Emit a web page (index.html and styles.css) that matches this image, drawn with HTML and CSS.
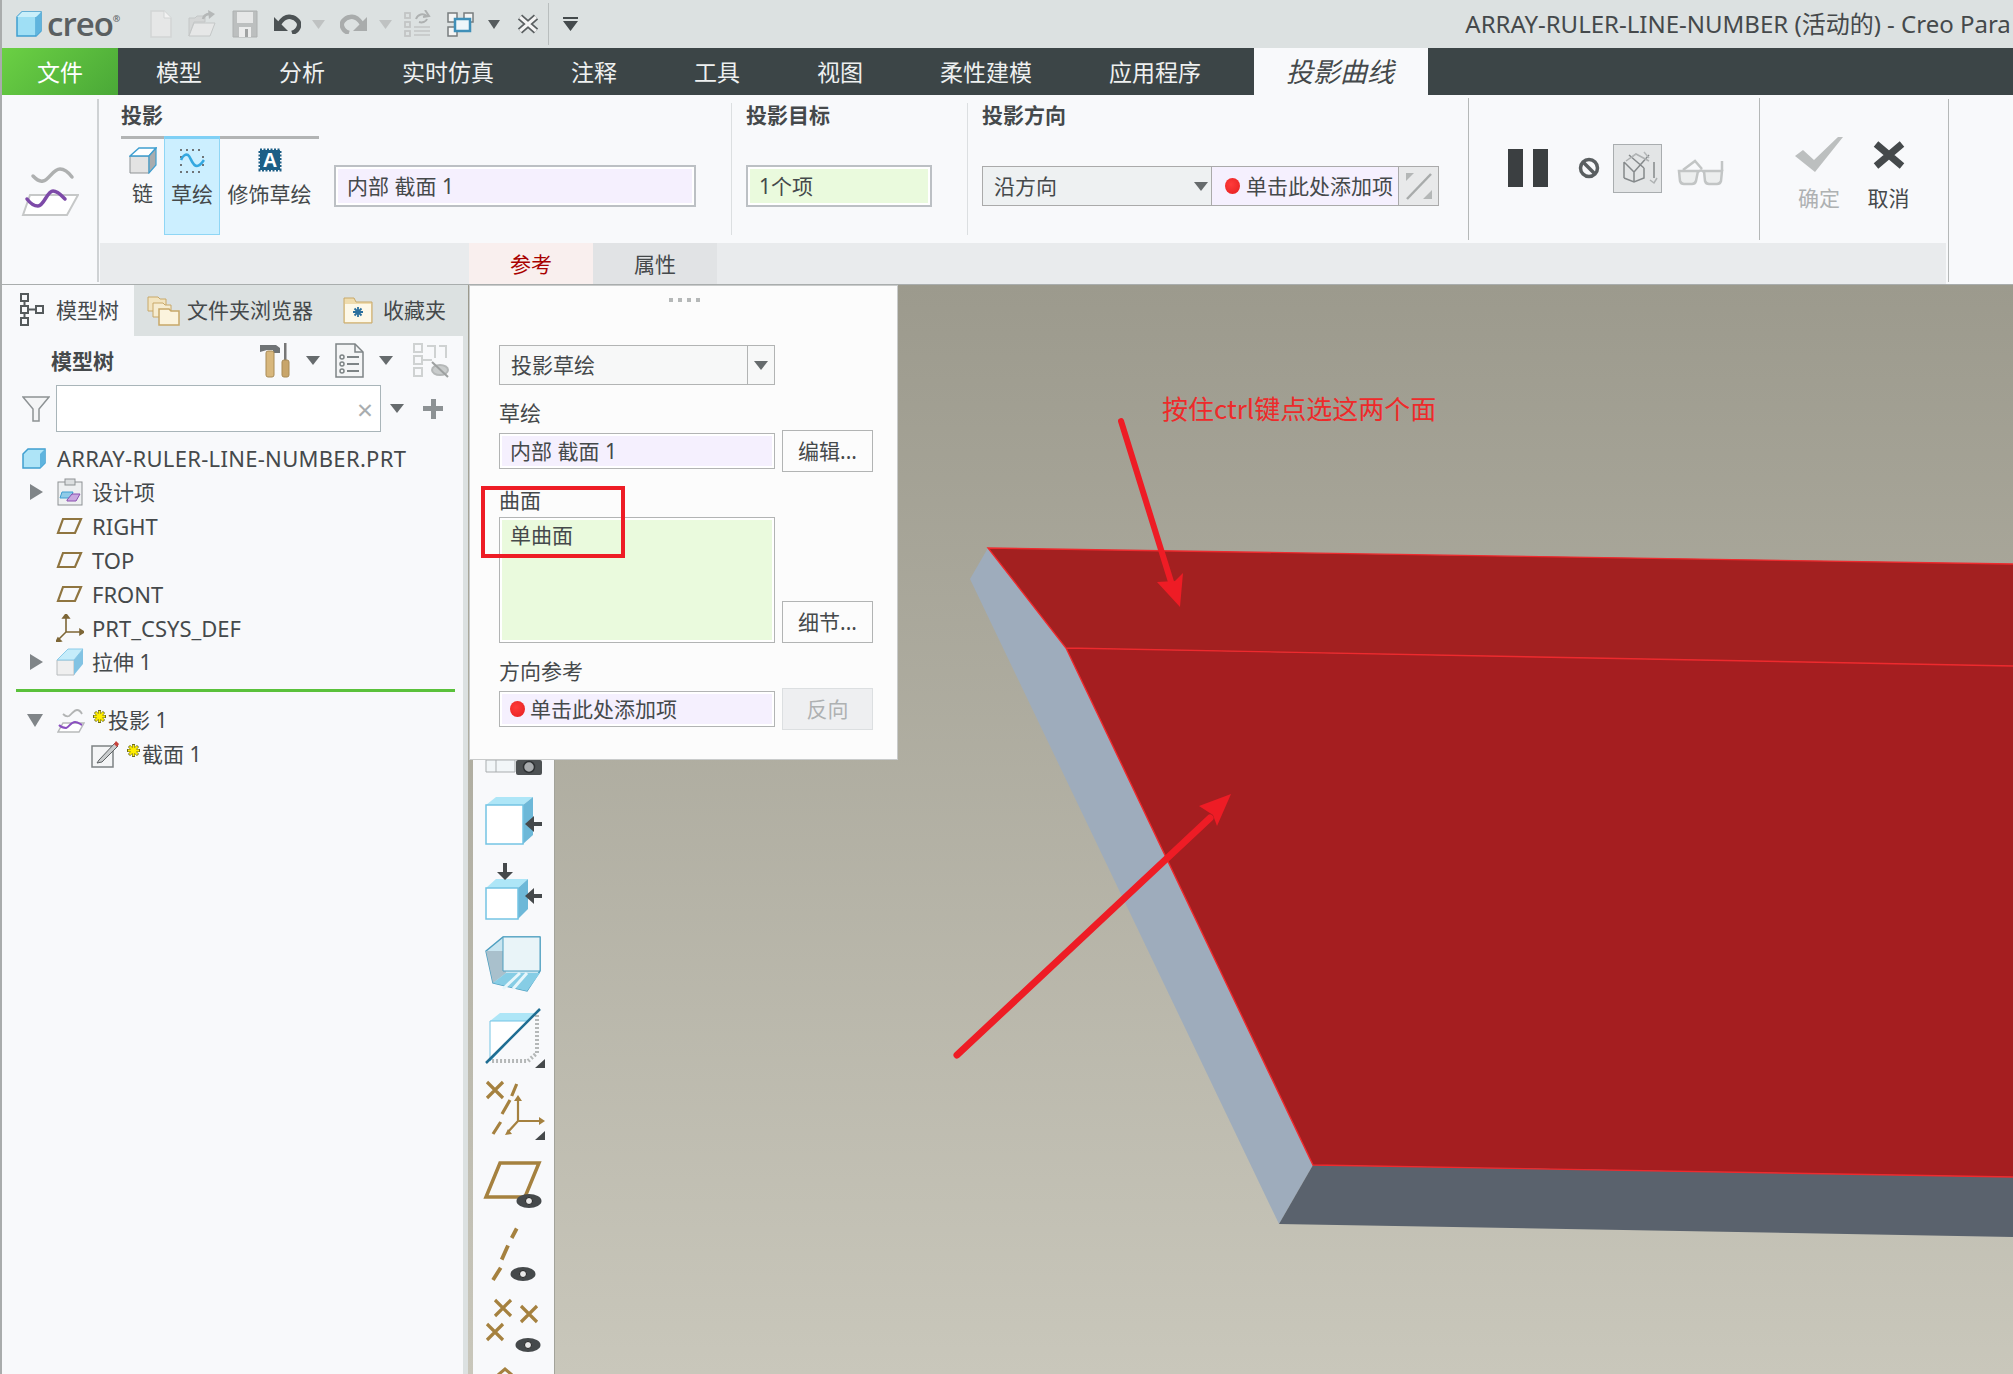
FILE: index.html
```html
<!DOCTYPE html>
<html lang="zh">
<head>
<meta charset="utf-8">
<title>Creo Parametric</title>
<link rel="stylesheet" href="styles.css">
</head>
<body>
<div class="app">
  <header class="titlebar">
    <svg class="logo" width="26" height="26" viewBox="0 0 26 26"><path d="M1 6 6 1h19v19l-5 5H1z" fill="#9fdff5" stroke="#3f9fd0" stroke-width="1.5"/><path d="M20 25V6h5" fill="none" stroke="#3f9fd0" stroke-width="1.2"/><path d="M20 6 25 1v19l-5 5z" fill="#5fb4de"/><path d="M1 6 6 1h19l-5 5z" fill="#c9effa"/></svg>
    <span class="brand">creo<sup>®</sup></span>
    <svg class="qa qa-new" width="24" height="28" viewBox="0 0 24 28"><path d="M2 1h13l7 7v19H2z" fill="#e6e7e7" stroke="#d2d5d5" stroke-width="1.5"/><path d="M15 1v7h7" fill="#f2f2f2" stroke="#d2d5d5"/></svg>
    <svg class="qa qa-open" width="28" height="28" viewBox="0 0 28 28"><path d="M1 26V8h6l2-2h8v6H6z" fill="#d4d6d6" stroke="#c4c7c7"/><path d="M1 26 6 13h21l-5 13z" fill="#e6e7e7" stroke="#c4c7c7"/><path d="M15 9c1-4 3-5 7-5" fill="none" stroke="#b5b8b8" stroke-width="2.500"/><path d="M20 0l7 4-6 5z" fill="#b5b8b8"/></svg>
    <svg class="qa qa-save" width="26" height="28" viewBox="0 0 26 28"><path d="M1 1h24v26H1z" fill="#bcbfbf" stroke="#aeb1b1"/><path d="M5 2h16v11H5z" fill="#e6e7e7"/><path d="M7 17h12v10H7z" fill="#ebecec"/><path d="M13 19h3v8h-3z" fill="#a0a3a3"/></svg>
    <svg class="qa qa-undo" width="28" height="20" viewBox="0 0 28 20"><path d="M6 10C10 4 14 2 18 3c6 1 9 6 8 9-1 4-4 6-7 7" fill="none" stroke="#4c5254" stroke-width="4.500"/><path d="M1 3v14h14z" fill="#4c5254"/></svg>
    <svg class="qa qa-ar" width="13" height="9" viewBox="0 0 13 9"><path d="M0 0h13L6.500 9z" fill="#bfc2c2"/></svg>
    <svg class="qa qa-redo" width="28" height="20" viewBox="0 0 28 20"><path d="M22 10C18 4 14 2 10 3 4 4 1 9 2 12c1 4 4 6 7 7" fill="none" stroke="#a9acac" stroke-width="4.500"/><path d="M27 3v14H13z" fill="#a9acac"/></svg>
    <svg class="qa qa-ar2" width="13" height="9" viewBox="0 0 13 9"><path d="M0 0h13L6.500 9z" fill="#bfc2c2"/></svg>
    <svg class="qa qa-regen" width="28" height="28" viewBox="0 0 28 28" fill="none" stroke="#c2c5c5" stroke-width="1.800"><rect x="1" y="3" width="5" height="5"/><rect x="1" y="12" width="5" height="5"/><rect x="1" y="21" width="5" height="5"/><path d="M10 17h16M10 21h16M10 25h16" stroke-width="1.600"/><path d="M12 9c2-5 7-6 11-3M21 0l4 6-6 1M23 9c-1 3-5 4-8 3" stroke="#aeb1b1" stroke-width="2"/></svg>
    <svg class="qa qa-win" width="30" height="25" viewBox="0 0 30 25"><rect x="1" y="1" width="9" height="9" fill="#f4f5f5" stroke="#777c7e" stroke-width="1.500"/><rect x="17" y="1" width="9" height="9" fill="#f4f5f5" stroke="#777c7e" stroke-width="1.500"/><rect x="1" y="15" width="9" height="9" fill="#f4f5f5" stroke="#777c7e" stroke-width="1.500"/><rect x="8" y="7" width="15" height="12" fill="#eef6fa" stroke="#3f8fb8" stroke-width="2.500"/></svg>
    <svg class="qa qa-ar3" width="12" height="9" viewBox="0 0 12 9"><path d="M0 0h12L6 9z" fill="#555b5d"/></svg>
    <svg class="qa qa-x" width="22" height="20" viewBox="0 0 22 20"><path d="M3 3l16 14M19 3 3 17" stroke="#5a5f61" stroke-width="6.500"/><path d="M3 3l16 14M19 3 3 17" stroke="#f4f4f4" stroke-width="3"/></svg>
    <span class="qa-div"></span>
    <svg class="qa qa-more" width="15" height="14" viewBox="0 0 15 14"><path d="M0 0h15v2H0zM0 4h15l-7.500 10z" fill="#444a4c"/></svg>
    <span class="apptitle">ARRAY-RULER-LINE-NUMBER (活动的) - Creo Para</span>
  </header>

  <nav class="menubar">
    <span class="m-file">文件</span>
    <span class="m-item">模型</span>
    <span class="m-item">分析</span>
    <span class="m-item">实时仿真</span>
    <span class="m-item">注释</span>
    <span class="m-item">工具</span>
    <span class="m-item">视图</span>
    <span class="m-item">柔性建模</span>
    <span class="m-item">应用程序</span>
    <span class="m-active">投影曲线</span>
  </nav>

  <section class="ribbon">
    <div class="rb-side">
      <svg width="58" height="50" viewBox="0 0 58 50"><path d="M12 10c3 3 6 6 10 5 6-1 10-12 17-12 5 0 9 4 12 8" fill="none" stroke="#aeb0b0" stroke-width="3.500" stroke-linecap="round"/><path d="M9 29h48L46 49H2z" fill="#fff" stroke="#c6c8c8" stroke-width="2"/><path d="M6 33c3 4 7 7 11 7 6 0 9-15 15-15 5 0 9 5 12 8" fill="none" stroke="#7d4aa8" stroke-width="3.500" stroke-linecap="round"/></svg>
    </div>
    <div class="rb-body">
      <div class="rb-main">
        <div class="sec sec-a">
          <h3 class="sec-h">投影</h3>
          <div class="sec-row">
            <div class="rtab rtab-chain">
              <svg width="28" height="27" viewBox="0 0 28 27"><path d="M1 9h19v17H1z" fill="#e3e3e3" stroke="#8f9395"/><path d="M1 9l9-8h17l-7 8z" fill="#fff" stroke="#3f9fd0" stroke-width="1.500"/><path d="M20 9l7-8v17l-7 8z" fill="#a9acae" stroke="#3f9fd0" stroke-width="1.200"/></svg>
              <span>链</span>
            </div>
            <div class="rtab rtab-on">
              <svg width="26" height="24" viewBox="0 0 26 24"><path d="M1 1h24M1 23h24" stroke="#6f7477" stroke-width="1.800" stroke-dasharray="2 4"/><path d="M1 8h2M1 16h2M23 8h2M23 16h2" stroke="#6f7477" stroke-width="1.800"/><path d="M2 11C4 6 7 5 9 6c3 2 4 11 9 11 3 0 5-3 7-6" fill="none" stroke="#35a8e0" stroke-width="2.600"/></svg>
              <span>草绘</span>
            </div>
            <div class="rtab rtab-cos">
              <svg width="24" height="24" viewBox="0 0 24 24"><rect x="2" y="2" width="20" height="20" fill="#1c5f86" stroke="#1c5f86" stroke-width="3" stroke-dasharray="2 1.500"/><text x="12" y="19" class="svg-a">A</text></svg>
              <span>修饰草绘</span>
            </div>
            <div class="field field-sk"><span class="field-in lilac">内部 截面 1</span></div>
          </div>
        </div>
        <div class="sec sec-b">
          <h3 class="sec-h">投影目标</h3>
          <div class="field field-tg"><span class="field-in green">1个项</span></div>
        </div>
        <div class="sec sec-c">
          <h3 class="sec-h">投影方向</h3>
          <div class="dir">
            <div class="dir-sel"><span>沿方向</span><i class="tri"></i></div>
            <div class="dir-in"><i class="dot"></i><span>单击此处添加项</span></div>
            <div class="dir-btn"><svg width="28" height="28" viewBox="0 0 28 28"><path d="M26 2 2 27" stroke="#a8abab" stroke-width="2.500"/><path d="M1 1h8L1 9zM27 27h-9l9-9z" fill="#b4b7b7"/></svg></div>
          </div>
        </div>
        <div class="sec sec-d">
          <svg width="40" height="49" viewBox="0 0 40 49"><rect y="5" width="15" height="38" fill="#3b3f41"/><rect x="25" y="5" width="15" height="38" fill="#3b3f41"/></svg>
          <svg class="d-stop" width="22" height="49" viewBox="0 0 22 49"><circle cx="11" cy="24" r="8.500" fill="none" stroke="#5a5f61" stroke-width="3.500"/><path d="M5 18l12 12" stroke="#5a5f61" stroke-width="3.500"/></svg>
          <div class="d-box"><svg width="47" height="47" viewBox="0 0 47 47" fill="none" stroke="#85898b" stroke-width="1.500"><path d="M10 17v16M10 17l10 10v10M10 33l10 4 10-4V23M20 27 35 10M15 10l15 13M40 17v16"/><path d="M12 16l10-7 13 7M36 35l4 3 3-5" stroke="#aeb1b2"/><path d="M18 12l4-3M30 7l5 6" stroke="#b5b8b9"/></svg></div>
          <svg class="d-glass" width="47" height="49" viewBox="0 0 47 49" fill="none" stroke="#c2c5c5" stroke-width="2.500"><path d="M2 27h19l-2 10q-1 3-4 3H7q-3 0-4-3z" fill="#eceeee"/><path d="M27 27h18l-1 10q-1 3-4 3h-8q-3 0-4-3z" fill="#eceeee"/><path d="M21 28q3-3 6 0M6 26 18 17l7 8M45 27V17"/></svg>
        </div>
        <div class="sec sec-e">
          <div class="act act-ok">
            <svg width="50" height="40" viewBox="0 0 50 40"><path d="M1 21l8-6 11 10L44 2h5L21 37z" fill="#bcbfbf"/></svg>
            <span>确定</span>
          </div>
          <div class="act act-no">
            <svg width="36" height="40" viewBox="0 0 36 40"><path d="M5 9l26 22M31 9 5 31" stroke="#45494b" stroke-width="7"/></svg>
            <span>取消</span>
          </div>
        </div>
      </div>
      <div class="rb-strip">
        <span class="st st-on">参考</span>
        <span class="st st-off">属性</span>
      </div>
    </div>
    <div class="rb-tail"></div>
  </section>

  <main class="work">
    <svg class="model" width="2013" height="1089" viewBox="0 285 2013 1089">
      <polygon points="988,548 970,579 1279,1224 1313,1165 1066,648" fill="#9eacbc"/>
      <polygon points="1279,1224 1313,1165 2013,1177 2013,1237" fill="#5a626d"/>
      <polygon points="988,548 2013,564 2013,666 1066,648" fill="#a32020"/>
      <polygon points="1066,648 2013,666 2013,1177 1313,1165" fill="#a51e20"/>
      <path d="M2013 564 988 548 1066 648 1313 1165 2013 1177M1066 648 2013 666" fill="none" stroke="#ee2a2e" stroke-width="1.400"/>
      <path d="M1121 421 1172 585" stroke="#ee1c25" stroke-width="6" stroke-linecap="round"/>
      <polygon points="1180,607 1157,582 1175,581 1183,573" fill="#ee1c25"/>
      <path d="M957 1055 1210 818" stroke="#ee1c25" stroke-width="7" stroke-linecap="round"/>
      <polygon points="1231,794 1199,806 1213,815 1217,826" fill="#ee1c25"/>
    </svg>
    <span class="note">按住ctrl键点选这两个面</span>

    <aside class="panel">
      <div class="ptabs">
        <div class="ptab ptab-on">
          <svg width="24" height="33" viewBox="0 0 24 33" fill="none" stroke="#555a5c" stroke-width="2"><rect x="1" y="1" width="7" height="7"/><rect x="1" y="13" width="7" height="7"/><rect x="1" y="25" width="7" height="7"/><rect x="16" y="13" width="7" height="7"/><path d="M4.500 8v5M4.500 20v5M8 16.500h8"/></svg>
          <span>模型树</span>
        </div>
        <div class="ptab ptab-f">
          <svg width="33" height="33" viewBox="0 0 33 33"><path d="M1 4h10l2 2h6v12H1z" fill="#f2e4c0" stroke="#c8a868"/><path d="M6 10h10l2 2h6v12H6z" fill="#f6ecd0" stroke="#c8a868"/><path d="M12 16h10l2 2h8v14H12z" fill="#fbf3dd" stroke="#c8a868" stroke-width="1.500"/></svg>
          <span>文件夹浏览器</span>
        </div>
        <div class="ptab ptab-s">
          <svg width="30" height="28" viewBox="0 0 30 28"><path d="M1 2h10l2 4h16v21H1z" fill="#efdcae" stroke="#c8a868"/><path d="M2 8h26v18H2z" fill="#fdf8e8"/><path d="M15 11v10M10 16h10M11.500 12.500l7 7M18.500 12.500l-7 7" stroke="#2a6f9e" stroke-width="1.800"/></svg>
          <span>收藏夹</span>
        </div>
      </div>
      <div class="phead">
        <strong>模型树</strong>
        <svg class="ph-tools" width="30" height="35" viewBox="0 0 30 35"><path d="M0 2h16l4 3v5H13V7H7L0 9z" fill="#6f7375"/><rect x="6" y="8" width="8" height="26" rx="2" fill="#d8b77c" stroke="#a88a55"/><rect x="24" y="0" width="2.500" height="18" fill="#777"/><rect x="22" y="17" width="7" height="17" rx="2" fill="#c8a56a" stroke="#a88a55"/></svg>
        <i class="tri ph-a"></i>
        <svg class="ph-list" width="29" height="35" viewBox="0 0 29 35" fill="none" stroke="#7e8486" stroke-width="1.500"><path d="M1 1h19l8 8v25H1z" fill="#f4f5f6"/><path d="M20 1v8h8"/><path d="M12 14h12M12 21h12M12 28h12" stroke-width="2"/><circle cx="7" cy="14" r="2"/><circle cx="7" cy="21" r="2"/><circle cx="7" cy="28" r="2"/></svg>
        <i class="tri ph-b"></i>
        <svg class="ph-hide" width="36" height="35" viewBox="0 0 36 35" fill="none" stroke="#cfd2d2" stroke-width="2"><rect x="1" y="1" width="8" height="8"/><rect x="1" y="13" width="8" height="8"/><rect x="1" y="25" width="8" height="8"/><path d="M14 3h8v12M26 3h7v12M9 17h10"/><ellipse cx="27" cy="27" rx="8" ry="5" fill="#c9cccc" stroke="#b5b8b8"/><path d="M19 19l16 15" stroke="#9da0a0"/></svg>
      </div>
      <div class="pfilter">
        <svg width="28" height="26" viewBox="0 0 28 26"><path d="M1 1h26L17 13v12h-6V13z" fill="#f4f5f6" stroke="#8d9294" stroke-width="1.500"/></svg>
        <div class="search"><span>×</span></div>
        <i class="tri pf-a"></i>
        <span class="pf-plus"></span>
      </div>
      <ul class="tree">
        <li class="row row-root">
          <svg class="ti" width="24" height="21" viewBox="0 0 24 21"><path d="M1 6 6 1h17v14l-5 5H1z" fill="#aee4f7" stroke="#3f9fd0" stroke-width="1.500"/><path d="M18 20V6l5-5v14z" fill="#5fb4de"/></svg>
          <span class="lat">ARRAY-RULER-LINE-NUMBER.PRT</span>
        </li>
        <li class="row">
          <i class="twist"></i>
          <svg class="ti" width="28" height="28" viewBox="0 0 26 28"><rect x="1" y="4" width="24" height="23" fill="#eef0f1" stroke="#8d9294"/><rect x="8" y="1" width="10" height="6" fill="#dcdfe0" stroke="#8d9294"/><path d="M5 14h11l-2 6H3z" fill="#8fcbe8" stroke="#3f9fd0"/><path d="M10 22l5-6h8l-4 7h-9z" fill="#c9a8e0" stroke="#8a4fb0"/></svg>
          <span>设计项</span>
        </li>
        <li class="row">
          <span class="tw-sp"></span>
          <svg class="ti" width="28" height="18" viewBox="0 0 28 18"><path d="M7 2h18l-6 14H2z" fill="none" stroke="#8f7540" stroke-width="2.200"/></svg>
          <span class="lat">RIGHT</span>
        </li>
        <li class="row">
          <span class="tw-sp"></span>
          <svg class="ti" width="28" height="18" viewBox="0 0 28 18"><path d="M7 2h18l-6 14H2z" fill="none" stroke="#8f7540" stroke-width="2.200"/></svg>
          <span class="lat">TOP</span>
        </li>
        <li class="row">
          <span class="tw-sp"></span>
          <svg class="ti" width="28" height="18" viewBox="0 0 28 18"><path d="M7 2h18l-6 14H2z" fill="none" stroke="#8f7540" stroke-width="2.200"/></svg>
          <span class="lat">FRONT</span>
        </li>
        <li class="row">
          <span class="tw-sp"></span>
          <svg class="ti" width="28" height="28" viewBox="0 0 28 28" fill="none" stroke="#7d6636" stroke-width="1.600"><path d="M10 3v15H26M10 18 2 26"/><path d="M10 0l-3 4h6zM28 18l-4-2.500v5zM0 28l5-1-3-3z" fill="#7d6636"/></svg>
          <span class="lat">PRT_CSYS_DEF</span>
        </li>
        <li class="row">
          <i class="twist"></i>
          <svg class="ti" width="28" height="28" viewBox="0 0 28 28"><path d="M1 12h17v15H1z" fill="#efefef" stroke="#b8bcbe"/><path d="M1 12 12 1h15L18 12z" fill="#c5ecfa" stroke="#8bcbe8"/><path d="M18 12l9-11v15l-9 11z" fill="#82c3e3"/></svg>
          <span>拉伸 1</span>
        </li>
      </ul>
      <div class="insert"></div>
      <ul class="tree">
        <li class="row">
          <i class="twist twist-open"></i>
          <svg class="ti" width="28" height="26" viewBox="0 0 28 26"><path d="M6 7c2 2 4 3 6 2 3-2 5-6 8-6 2 0 4 2 5 4" fill="none" stroke="#b2b4b4" stroke-width="1.800"/><path d="M6 16h21l-5 9H1z" fill="#fff" stroke="#b8babb" stroke-width="1.500"/><path d="M2 18c2 2 5 3 7 3 3-1 5-6 9-6 3 0 5 2 7 3" fill="none" stroke="#8a4fc0" stroke-width="2"/></svg>
          <svg class="star" width="13" height="13" viewBox="0 0 13 13"><path d="M6.500 0v13M0 6.500h13M2 2l9 9M11 2l-9 9" stroke="#6b6a20" stroke-width="3"/><path d="M6.500 1v11M1 6.500h11M2.500 2.500l8 8M10.500 2.500l-8 8" stroke="#ffee00" stroke-width="1.800"/></svg>
          <span>投影 1</span>
        </li>
        <li class="row row-child">
          <svg class="ti" width="28" height="28" viewBox="0 0 28 28"><rect x="1" y="6" width="21" height="21" fill="#f4f5f6" stroke="#7d8284" stroke-width="1.500"/><path d="M8 20 24 3l3 3-16 16-5 1z" fill="#c9cccd" stroke="#5d6163"/><path d="M23 4l2-3 3 3-2 3z" fill="#c8423c"/></svg>
          <svg class="star" width="13" height="13" viewBox="0 0 13 13"><path d="M6.500 0v13M0 6.500h13M2 2l9 9M11 2l-9 9" stroke="#6b6a20" stroke-width="3"/><path d="M6.500 1v11M1 6.500h11M2.500 2.500l8 8M10.500 2.500l-8 8" stroke="#ffee00" stroke-width="1.800"/></svg>
          <span>截面 1</span>
        </li>
      </ul>
    </aside>

    <div class="gutter"></div>

    <div class="vtools">
      <svg width="81" height="30" viewBox="0 0 81 30"><path d="M13 5h29v12H13zM23 5v12" fill="#f2f6f8" stroke="#a9adaf"/><rect x="43" y="5" width="26" height="15" rx="2" fill="#4d5153"/><circle cx="56" cy="12" r="5.500" fill="#a8abad" stroke="#2e3133" stroke-width="1.500"/></svg>
      <svg width="81" height="72" viewBox="0 0 81 72"><path d="M13 20l10-8h37l-10 8z" fill="#aee6f7"/><path d="M50 20l10-8v38l-10 9z" fill="#6db8d8"/><rect x="13" y="20" width="37" height="39" fill="#fff" stroke="#74c4e4" stroke-width="1.500"/><path d="M52 39l9-8v6h8v4h-8v6z" fill="#45494b"/></svg>
      <svg width="81" height="72" viewBox="0 0 81 72"><path d="M13 31l10-9h32l-10 9z" fill="#aee6f7"/><path d="M45 31l10-9v30l-10 10z" fill="#6db8d8"/><rect x="13" y="31" width="32" height="31" fill="#fff" stroke="#74c4e4" stroke-width="1.500"/><path d="M32 23l-8-8h6V6h4v9h6z" fill="#45494b"/><path d="M52 39l9-8v6h8v4h-8v6z" fill="#45494b"/></svg>
      <svg width="81" height="72" viewBox="0 0 81 72"><path d="M13 22 30 8h37v34L54 62 20 54z" fill="#c9e5f0" stroke="#4e9fc0" stroke-width="1.500"/><path d="M13 22l17 0 3 22-13 10z" fill="#a9c0cc"/><path d="M33 44h34L54 62 20 54z" fill="#86cde5"/><path d="M30 8h37v34H30z" fill="#e9f4f8" stroke="#4e9fc0"/><path d="M30 60l17-16M40 60l14-16" stroke="#e6f6fb" stroke-width="3"/></svg>
      <svg width="81" height="72" viewBox="0 0 81 72"><path d="M17 20l10-8h37L55 20z" fill="#aee6f7"/><path d="M17 20h38L17 60z" fill="#fff" stroke="#74c4e4"/><path d="M64 14v38L55 60H17" fill="none" stroke="#b5b8b8" stroke-width="4" stroke-dasharray="2 2"/><path d="M13 62 67 8" stroke="#1f6d92" stroke-width="2.500"/><path d="M62 67h10V58z" fill="#45494b"/></svg>
      <svg width="81" height="72" viewBox="0 0 81 72" fill="none" stroke="#a5813f" stroke-width="3.200"><path d="M14 9l16 16M30 9 14 25M43.700 11 38.700 23M37 27l-8 14M27.700 49 20 61"/><path d="M45 27v21h23M45 48 35 59" stroke-width="2.200"/><path d="M45 22l-4 6h8zM72 48l-6-4v8zM32 62l7-1-4-5z" fill="#a5813f" stroke="none"/><path d="M62 67h10V58z" fill="#45494b" stroke="none"/></svg>
      <svg width="81" height="72" viewBox="0 0 81 72"><path d="M27 18h39L52 52H13z" fill="none" stroke="#a5813f" stroke-width="3.500"/><ellipse cx="56" cy="56" rx="12.500" ry="7" fill="#45494b"/><circle cx="56" cy="56" r="3.500" fill="#e8e8e8" stroke="#222"/></svg>
      <svg width="81" height="72" viewBox="0 0 81 72"><path d="M43.700 11.500 38.700 21M35 28.500 28.700 42.600M27.700 50.700 20 63" stroke="#a5813f" stroke-width="3.800"/><ellipse cx="50" cy="57" rx="12.500" ry="7" fill="#45494b"/><circle cx="50" cy="57" r="3.500" fill="#e8e8e8" stroke="#222"/></svg>
      <svg width="81" height="72" viewBox="0 0 81 72"><path d="M22 11l16 16M38 11 22 27M48 17l16 16M64 17 48 33M14 35l16 16M30 35 14 51" stroke="#a5813f" stroke-width="3.200"/><ellipse cx="55" cy="56" rx="12.500" ry="7" fill="#45494b"/><circle cx="55" cy="56" r="3.500" fill="#e8e8e8" stroke="#222"/></svg>
      <svg width="81" height="14" viewBox="0 0 81 14"><path d="M25 14l7-6 7 6" fill="none" stroke="#a5813f" stroke-width="3"/></svg>
    </div>

    <div class="popup">
      <div class="grip"><i></i><i></i><i></i><i></i></div>
      <div class="combo"><span>投影草绘</span><b><i class="tri"></i></b></div>
      <label class="plabel">草绘</label>
      <div class="prow">
        <div class="pfield"><span class="pfield-in lilac">内部 截面 1</span></div>
        <span class="pbtn">编辑...</span>
      </div>
      <label class="plabel">曲面</label>
      <div class="prow prow-tall">
        <div class="pfield"><span class="pfield-in green">单曲面</span></div>
        <span class="pbtn">细节...</span>
      </div>
      <label class="plabel">方向参考</label>
      <div class="prow">
        <div class="pfield"><span class="pfield-in lilac"><i class="dot"></i>单击此处添加项</span></div>
        <span class="pbtn pbtn-off">反向</span>
      </div>
      <div class="redbox"></div>
    </div>
  </main>
</div>
</body>
</html>
```
FILE: styles.css
```css
* { box-sizing: border-box; }
html, body { margin: 0; padding: 0; height: 100%; overflow: hidden; }
body {
  font-family: "Noto Sans", "Noto Sans CJK SC", sans-serif;
  font-size: 21px;
  line-height: 28px;
  color: #45494b;
  background: #f8f9fb;
}
ul { list-style: none; margin: 0; padding: 0; }
h3 { margin: 0; }
svg { display: block; flex: none; }
i { display: block; font-style: normal; }

.app {
  width: 2013px;
  height: 1374px;
  display: flex;
  flex-direction: column;
  border-left: 2px solid #a9acac;
  overflow: hidden;
}

/* title bar */
.titlebar {
  height: 48px;
  flex: none;
  display: flex;
  align-items: center;
  background: #dce1e1;
  white-space: nowrap;
  overflow: hidden;
}
.logo { margin-left: 14px; }
.brand { margin-left: 5px; font-family: "Open Sans", sans-serif; font-size: 33px; font-weight: 600; color: #5a5f61; letter-spacing: -1px; line-height: 48px; }
.brand sup { font-size: 9px; line-height: 0; vertical-align: 14px; }
.qa-new { margin-left: 30px; }
.qa-open { margin-left: 15px; }
.qa-save { margin-left: 16px; }
.qa-undo { margin-left: 15px; }
.qa-ar { margin-left: 11px; }
.qa-redo { margin-left: 15px; }
.qa-ar2 { margin-left: 11px; }
.qa-regen { margin-left: 12px; }
.qa-win { margin-left: 15px; }
.qa-ar3 { margin-left: 11px; }
.qa-x { margin-left: 17px; }
.qa-div { width: 1px; height: 42px; background: #b9bebe; margin-left: 9px; flex: none; }
.qa-more { margin-left: 14px; }
.apptitle { margin-left: 887px; font-size: 24px; color: #45494b; }

/* menu */
.menubar {
  height: 47px;
  flex: none;
  display: flex;
  align-items: center;
  background: #3c4547;
  color: #eef0f0;
  font-size: 23px;
  white-space: nowrap;
}
.m-file {
  width: 116px;
  height: 47px;
  display: flex;
  align-items: center;
  justify-content: center;
  color: #fff;
  background: linear-gradient(135deg, #6bd044, #4aa837);
}
.m-item { margin-left: 77px; }
.m-file + .m-item { margin-left: 38px; }
.m-active {
  margin-left: 53px;
  width: 174px;
  height: 47px;
  display: flex;
  align-items: center;
  padding-left: 32px;
  background: #f8f9fb;
  color: #45494b;
  font-size: 27px;
  font-style: italic;
}

/* ribbon */
.ribbon {
  height: 190px;
  flex: none;
  display: flex;
  background: #f8f9fb;
  border-bottom: 1px solid #a9adad;
}
.rb-side {
  width: 97px;
  height: 183px;
  margin-top: 4px;
  flex: none;
  display: flex;
  align-items: center;
  justify-content: center;
  border-right: 2px solid #cfd2d4;
}
.rb-body { width: 1847px; flex: none; display: flex; flex-direction: column; }
.rb-main { height: 148px; display: flex; flex: none; }
.rb-strip { flex: 1; margin-left: 1px; padding-left: 369px; display: flex; background: #e9ebed; }
.rb-tail { flex: 1; margin: 4px 0 2px 2px; border-left: 1px solid #b5b8b8; }
.st { width: 124px; display: flex; align-items: center; justify-content: center; }
.st-on { background: #f9efee; color: #a80000; }
.st-off { background: #e1e3e5; }

.sec { flex: none; }
.sec-h { font-size: 21px; font-weight: 700; line-height: 24px; color: #45494b; }
.sec-a { width: 632px; margin-top: 8px; padding-left: 22px; }
.sec-b { width: 236px; margin-top: 8px; padding-left: 14px; height: 132px; border-left: 1px solid #dcdfe1; }
.sec-c { width: 501px; margin-top: 8px; padding-left: 14px; height: 132px; border-left: 1px solid #dcdfe1; }
.sec-d { width: 291px; margin-top: 3px; height: 142px; padding: 46px 0 0 39px; border-left: 1px solid #b5b8b8; display: flex; align-items: flex-start; }
.sec-e { width: 187px; margin-top: 3px; height: 142px; padding: 37px 0 0 29px; border-left: 1px solid #b5b8b8; display: flex; gap: 10px; }
.sec-row { display: flex; margin-top: 9px; }

.rtab {
  height: 99px;
  border-top: 3px solid #b2b4b4;
  display: flex;
  flex-direction: column;
  align-items: center;
  padding-top: 8px;
}
.rtab-chain { width: 43px; }
.rtab-chain span { margin-top: 5px; }
.rtab-on { width: 56px; background: #ccefff; border: 1px solid #8fd6f5; border-top: 3px solid #7fd0f5; padding-top: 10px; }
.rtab-on span { margin-top: 7px; }
.rtab-cos { width: 99px; padding-top: 9px; }
.rtab-cos span { margin-top: 8px; }
.svg-a { font-family: "Liberation Sans", sans-serif; font-size: 20px; font-weight: 700; fill: #fff; text-anchor: middle; }

.field { height: 42px; border: 2px solid #bcc0c4; background: #fff; padding: 2px; flex: none; }
.field-in { display: block; height: 100%; line-height: 34px; padding-left: 9px; }
.lilac { background: #f5f0fe; }
.green { background: #eafadd; }
.field-sk { width: 362px; margin: 29px 0 0 15px; }
.field-tg { width: 186px; margin-top: 38px; }

.dir { display: flex; margin-top: 39px; height: 40px; }
.dir-sel { width: 230px; display: flex; align-items: center; justify-content: space-between; padding: 0 3px 0 11px; background: #eef1f2; border: 1px solid #aaa; }
.dir-in { width: 186px; display: flex; align-items: center; gap: 6px; padding: 0 0 0 13px; background: #f5f0fe; border-top: 1px solid #aaa; border-bottom: 1px solid #aaa; white-space: nowrap; overflow: hidden; }
.dir-btn { width: 41px; display: flex; align-items: center; justify-content: center; background: #e8e9ea; border: 1px solid #aaa; }

.tri { width: 0; height: 0; flex: none; border-left: 7px solid transparent; border-right: 7px solid transparent; border-top: 9px solid #666b6d; }
.dot { display: inline-block; width: 15px; height: 16px; border-radius: 50%; background: radial-gradient(circle at 40% 40%, #ff3b3b, #e41f1f); flex: none; }

.d-stop { margin-left: 30px; }
.d-box { width: 49px; height: 49px; margin-left: 13px; background: #e3e5e6; border: 1px solid #a9adaf; display: flex; align-items: center; justify-content: center; }
.d-glass { margin-left: 15px; }
.act { display: flex; flex-direction: column; align-items: center; }
.act span { margin-top: 9px; }
.act-ok { width: 60px; color: #aeb1b2; }
.act-no { width: 59px; }

/* workspace */
.work {
  position: relative;
  flex: 1;
  min-height: 0;
  display: flex;
  overflow: hidden;
  background: linear-gradient(#9c9a8d, #c9c7bb);
}
.model { position: absolute; left: -2px; top: 0; }
.note {
  position: absolute;
  left: 1160px;
  top: 109px;
  font-size: 26px;
  line-height: 28px;
  color: #ee2a2a;
  white-space: nowrap;
  font-family: "Noto Sans CJK SC", sans-serif;
}

/* left panel */
.panel { position: relative; width: 461px; flex: none; background: #f8f9fb; }
.gutter { position: relative; width: 5px; flex: none; background: #dce1e1; }
.ptabs { height: 51px; display: flex; background: #dce1e1; }
.ptab { display: flex; align-items: center; white-space: nowrap; padding-bottom: 2px; }
.ptab-on { width: 132px; background: #f8f9fb; padding-left: 18px; gap: 12px; }
.ptab-f { width: 191px; padding-left: 13px; gap: 7px; }
.ptab-s { padding-left: 18px; gap: 10px; }
.phead { height: 49px; display: flex; align-items: center; padding-left: 49px; }
.phead strong { width: 209px; font-weight: 700; flex: none; }
.ph-a { margin-left: 16px; }
.ph-list { margin-left: 15px; }
.ph-b { margin-left: 15px; }
.ph-hide { margin-left: 20px; }
.pfilter { height: 47px; display: flex; align-items: center; padding-left: 20px; }
.search { width: 325px; height: 47px; margin-left: 6px; flex: none; background: #fff; border: 1px solid #a9b5b9; display: flex; align-items: center; justify-content: flex-end; padding-right: 7px; color: #a9adaf; font-size: 28px; }
.pf-a { margin-left: 9px; }
.pf-plus { position: relative; width: 20px; height: 20px; margin-left: 19px; flex: none; background: linear-gradient(#8d9294, #8d9294) center / 100% 5px no-repeat, linear-gradient(#8d9294, #8d9294) center / 5px 100% no-repeat; }

.tree { padding-top: 9px; }
.insert + .tree { padding-top: 11px; }
.lat { font-size: 22px; }
.row { height: 34px; display: flex; align-items: center; padding-left: 28px; white-space: nowrap; }
.row .ti { flex: none; margin-right: 8px; }
.row-root { padding-left: 20px; }
.row-root .ti { margin-right: 11px; }
.row-root .lat { letter-spacing: .3px; }
.twist { width: 0; height: 0; margin-right: 13px; flex: none; border-top: 8px solid transparent; border-bottom: 8px solid transparent; border-left: 13px solid #808588; }
.twist-open { margin-left: -3px; margin-right: 14px; border-left: 8px solid transparent; border-right: 8px solid transparent; border-top: 13px solid #808588; border-bottom: 0; }
.tw-sp { width: 26px; flex: none; }
.row-child { padding-left: 89px; }
.star { align-self: flex-start; margin: 7px 2px 0 0; }
.insert { height: 3px; margin: 10px 8px 0 14px; background: #5ac13b; }

/* viewport toolbar */
.vtools {
  position: relative;
  width: 82px;
  margin-left: 5px;
  flex: none;
  padding-top: 470px;
  background: #f8f9fb;
  border-right: 1px solid #a3a39a;
  overflow: hidden;
}

/* popup */
.popup {
  position: absolute;
  left: 467px;
  top: 0;
  width: 429px;
  height: 475px;
  padding-left: 29px;
  background: #fcfcfc;
  border: 1px solid #c9cbcb;
  white-space: nowrap;
}
.grip { height: 59px; padding: 12px 0 0 170px; display: flex; gap: 5px; align-items: flex-start; }
.grip i { width: 4px; height: 4px; background: #b5b8b8; }
.combo { width: 276px; height: 40px; display: flex; background: #f7f8f8; border: 1px solid #b2b4b4; }
.combo span { flex: 1; padding-left: 11px; line-height: 38px; }
.combo b { width: 27px; border-left: 1px solid #b2b4b4; display: flex; align-items: center; justify-content: center; font-weight: 400; }
.plabel { display: block; margin: 14px 0 3px; height: 28px; }
.prow { display: flex; align-items: center; gap: 7px; }
.prow-tall { align-items: flex-end; }
.pfield { width: 276px; height: 36px; flex: none; background: #fff; border: 1px solid #b2b4b4; padding: 2px; }
.prow-tall .pfield { height: 126px; }
.pfield-in { display: flex; align-items: center; height: 100%; padding-left: 8px; }
.prow-tall .pfield-in { align-items: flex-start; line-height: 30px; }
.pfield-in .dot { margin-right: 5px; }
.pbtn { width: 91px; height: 42px; flex: none; display: flex; align-items: center; justify-content: center; background: #fcfcfc; border: 1px solid #b2b4b4; }
.pbtn-off { background: #eeeff1; border-color: #dcdfe1; color: #aeb1b2; }
.redbox { position: absolute; left: 11px; top: 200px; width: 144px; height: 72px; border: 4px solid #ee1c25; }
```
